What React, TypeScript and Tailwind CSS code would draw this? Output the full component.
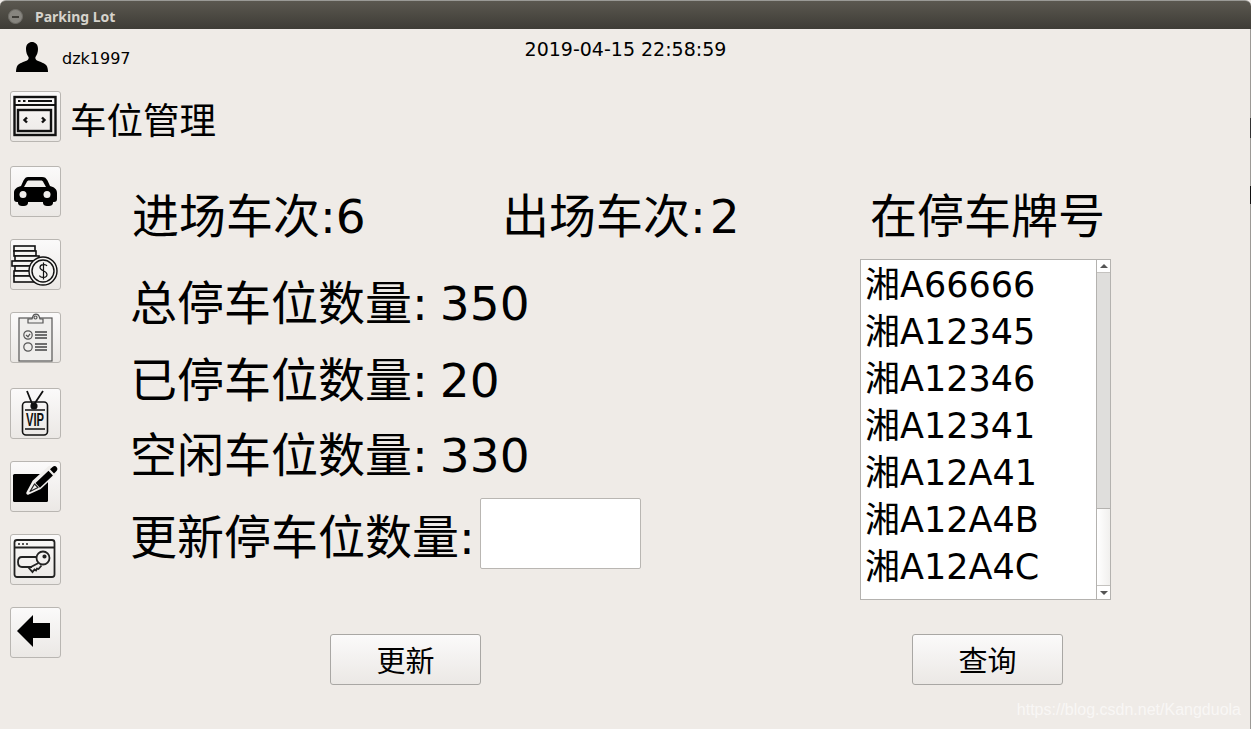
import React from "react";

const cjk = "font-['DejaVu_Sans','Noto_Sans_CJK_SC',sans-serif]";

const plates = ["湘A66666", "湘A12345", "湘A12346", "湘A12341", "湘A12A41", "湘A12A4B", "湘A12A4C"];

const IconWindow = () => (
  <svg width="45" height="45" viewBox="0 0 45 45" fill="none" stroke="#111" strokeWidth="2.2">
    <rect x="1.5" y="3" width="41" height="38" strokeWidth="2.4" />
    <path d="M1.5 11h41" />
    <path d="M5 7h2.5M10 7h2.5M15 7h24" strokeWidth="1.8" />
    <rect x="5" y="16" width="33" height="21" strokeWidth="2.4" />
    <path d="M14 23.500l-2.500 2.500 2.500 2.500M29 23.500l2.500 2.500-2.500 2.500" strokeWidth="2.4" />
  </svg>
);

const IconCar = () => (
  <svg width="45" height="45" viewBox="0 0 45 45">
    <path
      fill="#000"
      d="M15 8h14c3 0 4 1 5.500 3.500L37 17c4 1 7 3 7 7v6c0 2-1 3-3 3h-1v1c0 2-2 3-4 3h-2c-2 0-4-1-4-3v-1H15v1c0 2-2 3-4 3H9c-2 0-4-1-4-3v-1H4c-2 0-3-1-3-3v-6c0-4 3-6 7-7l2.500-5.500C12 9 13 8 15 8z"
    />
    <path fill="#f1efed" d="M16 11.500h12c1 0 2 .5 2.500 2L33 18H11l2.500-4.500c.5-1.500 1.500-2 2.500-2z" />
    <circle cx="10" cy="25.500" r="3.500" fill="#f1efed" />
    <circle cx="34" cy="25.500" r="3.500" fill="#f1efed" />
  </svg>
);

const IconCoins = () => (
  <svg width="49" height="45" viewBox="0 0 49 45" fill="#f5f4f2" stroke="#111" strokeWidth="1.6">
    <rect x="3" y="4" width="21" height="5" />
    <rect x="3" y="9" width="22" height="5" />
    <rect x="4" y="14" width="24" height="5" />
    <rect x="1" y="19" width="24" height="5" />
    <rect x="4" y="24" width="23" height="5" />
    <rect x="3" y="29" width="24" height="5" />
    <rect x="3" y="34" width="26" height="6" />
    <circle cx="32" cy="29" r="14" strokeWidth="1.4" />
    <circle cx="32" cy="29" r="11" strokeWidth="1.4" />
    <path d="M36 24c-1-2-7-2-7 1.500s7 3 7 7-7 3.500-7.500 1M32.500 20.500v17" fill="none" strokeWidth="1.2" />
  </svg>
);

const IconClipboard = () => (
  <svg width="45" height="49" viewBox="0 0 45 49" fill="none" stroke="#555" strokeWidth="1.2">
    <rect x="6" y="5" width="33" height="43" fill="#efeeec" />
    <path d="M15 10V6h4l1-3c1-2.500 5-2.500 6 0l1 3h3v4z" fill="#efeeec" />
    <circle cx="22.500" cy="4.500" r="1.500" />
    <circle cx="15" cy="22" r="4.200" />
    <path d="M13 22l2 1.800 2-3" />
    <circle cx="15" cy="34" r="4.200" />
    <path d="M22 19h12M22 22h12M22 25h12M22 31h12M22 34h12M22 37h12" strokeWidth="1.5" stroke="#444" />
  </svg>
);

const IconVip = () => (
  <svg width="45" height="49" viewBox="0 0 45 49" fill="none" stroke="#111" strokeWidth="1.6">
    <path d="M14 2l6 15M30 2l-10 15" strokeWidth="1.8" />
    <circle cx="21" cy="17" r="2.800" fill="#111" />
    <rect x="9.500" y="13" width="25" height="33" rx="3.500" />
    <path d="M12 21h20M12 40h20" strokeWidth="1.500" />
    <text x="13" y="37" textLength="18" lengthAdjust="spacingAndGlyphs" fontSize="19" fontWeight="700" fill="#111" stroke="none" fontFamily="Liberation Sans">VIP</text>
  </svg>
);

const IconEdit = () => (
  <svg width="49" height="47" viewBox="0 0 49 47">
    <rect x="2" y="11" width="35" height="28" rx="1.500" fill="#000" />
    <path d="M17 30l6-11.100 15.300-14.200 5.400 5.800L28.500 24.700z" fill="#f1efed" stroke="#f1efed" strokeWidth="3.500" strokeLinejoin="round" />
    <path d="M19 28.500l4.500-7.500 3.500 3.500z" fill="#f1efed" stroke="#222" strokeWidth="1.200" strokeLinejoin="round" />
    <path d="M24.500 20l13-12.300 4.400 4.700-13 12.300z" fill="#000" />
    <path d="M39 6.300l2.500-2.300c1.500-1.300 3-1.300 4 0 1.200 1.200 1.200 2.800 0 4l-2.500 2.500z" fill="#000" />
  </svg>
);

const IconKey = () => (
  <svg width="45" height="45" viewBox="0 0 45 45" fill="none" stroke="#222" strokeWidth="1.800">
    <rect x="1.500" y="3" width="40" height="37" rx="2.500" />
    <path d="M1.500 10.500h40" />
    <path d="M5 7h2M9 7h2M13 7h2" strokeWidth="1.500" />
    <path d="M24 20H9c-2.500 0-4 2-4 5s1.500 5 4 5h10" />
    <path d="M25.500 26L16 31l3.500 4 2-2.500 1.500 1 1-2 1.500.5 3-3.500" />
    <circle cx="30" cy="21" r="6.500" />
    <circle cx="31.500" cy="19.500" r="1.200" fill="#222" />
  </svg>
);

const IconBack = () => (
  <svg width="45" height="45" viewBox="0 0 45 45">
    <path d="M4 21L20 5v8h17v15H20v9z" fill="#000" />
  </svg>
);

// kept as a map so the sidebar stays readable
const navItems = [
  { icon: <IconCar />, className: "mt-[24px]" },
  { icon: <IconCoins />, className: "mt-[22px]" },
  { icon: <IconClipboard />, className: "mt-[22px]" },
  { icon: <IconVip />, className: "mt-[25px]" },
  { icon: <IconEdit />, className: "mt-[22px]" },
  { icon: <IconKey />, className: "mt-[22px]" },
  { icon: <IconBack />, className: "mt-[22px]" },
];

const IconButton: React.FC<{ className?: string; children: React.ReactNode }> = ({ className = "", children }) => (
  <button className={`flex h-[51px] w-[51px] items-center justify-center rounded-[3px] border border-[#b9b6b2] bg-gradient-to-b from-[#fbfafa] to-[#ebe8e5] ${className}`}>
    {children}
  </button>
);

const ActionButton: React.FC<{ label: string; className?: string }> = ({ label, className = "" }) => (
  <button className={`flex h-[51px] w-[151px] items-center justify-center rounded-[3px] border border-[#a9a7a4] bg-gradient-to-b from-[#fbfafa] to-[#ebe8e5] pt-[5px] text-[29px] leading-none text-black ${className}`}>
    {label}
  </button>
);

const StatRow: React.FC<{ label: string; value: string; className?: string }> = ({ label, value, className = "" }) => (
  <div className={`ml-[-2px] flex h-[60px] items-center text-[47px] leading-none whitespace-pre ${className}`}>
    <span>{label}</span>
    <span className="ml-[12px]">{value}</span>
  </div>
);

export default function App() {
  return (
    <div className={`relative flex h-[729px] w-[1251px] flex-col overflow-hidden bg-[#efebe7] text-black ${cjk}`}>
      {/* Title bar */}
      <div className="flex h-[29px] items-center rounded-t-[6px] border-t border-[#9a9a96] bg-gradient-to-b from-[#5b5850] to-[#3e3c36] pl-[8px] pt-[3px]">
        <div className="flex h-[15px] w-[15px] items-center justify-center rounded-full border border-[#6f6d67] bg-[#87857f]">
          <div className="h-[2px] w-[7px] bg-[#3f3d38]" />
        </div>
        <span className="ml-[12px] font-['Noto_Sans',sans-serif] text-[14px] font-bold text-[#d6d3cc]">Parking Lot</span>
      </div>

      {/* User and clock */}
      <div className="flex h-[62px] items-start">
        <div className="ml-[16px] mt-[13px] flex items-center">
          <svg width="32" height="30" viewBox="0 0 32 30">
            <path
              fill="#000"
              d="M10 7c0-5 3-7 6-7s6 2 6 7c0 3-1 6-2.500 8-.5 1 0 2.500 1.500 3.500 3 1.500 8 2.500 9.500 5 1 1.500 1.500 4 1.500 6.500H0c0-2.500.5-5 1.500-6.500 1.500-2.500 6.500-3.500 9.500-5 1.500-1 2-2.500 1.500-3.500C11 13 10 10 10 7z"
            />
          </svg>
          <span className="ml-[14px] pt-[3px] text-[16px] leading-none">dzk1997</span>
        </div>
        <div className="ml-[394px] mt-[10px] text-[19px] leading-[20px]">2019-04-15 22:58:59</div>
      </div>

      <div className="flex flex-1">
        {/* Sidebar */}
        <aside className="ml-[10px] flex w-[51px] flex-col">
          <IconButton>
            <IconWindow />
          </IconButton>
          {navItems.map((item, i) => (
            <IconButton key={i} className={item.className}>
              {item.icon}
            </IconButton>
          ))}
        </aside>

        <main className="flex flex-1 flex-col">
          <h1 className="ml-[9px] flex h-[60px] items-center pt-[2px] text-[36.500px] leading-none font-normal">车位管理</h1>

          <div className="flex">
            {/* Left column */}
            <div className="ml-[71px] w-[728px]">
              <div className="mt-[35px] flex h-[60px] items-center text-[47px] leading-none">
                <span className="w-[370px]">进场车次:6</span>
                <span>出场车次:</span>
                <span className="ml-[4px]">2</span>
              </div>
              <StatRow label="总停车位数量:" value="350" className="mt-[27px]" />
              <StatRow label="已停车位数量:" value="20" className="mt-[17px]" />
              <StatRow label="空闲车位数量:" value="330" className="mt-[15px]" />
              <div className="ml-[-2px] mt-[13px] flex items-center text-[47px] leading-none">
                <span className="pt-[8px]">更新停车位数量:</span>
                <div className="ml-[5px] h-[71px] w-[161px] rounded-[2px] border border-[#b9b6b2] bg-white" />
              </div>
              <ActionButton label="更新" className="ml-[198px] mt-[65px]" />
            </div>

            {/* Right column */}
            <div className="w-[251px]">
              <div className="mt-[35px] flex h-[60px] items-center pl-[10px] text-[47px] leading-none whitespace-nowrap">在停车牌号</div>
              <div className="mt-[13px] flex h-[341px] w-[251px] border border-[#b4b2af] bg-white">
                <ul className="flex-1 pl-[4px] pt-[2px]">
                  {plates.map((plate) => (
                    <li key={plate} className="h-[47px] text-[35px] leading-[47px] whitespace-nowrap">
                      {plate}
                    </li>
                  ))}
                </ul>
                <div className="flex w-[14px] flex-col border-l border-[#b4b2af]">
                  <div className="flex h-[13px] items-center justify-center border-b border-[#c4c2bf]">
                    <div className="h-0 w-0 border-x-[4px] border-b-[4px] border-x-transparent border-b-[#555]" />
                  </div>
                  <div className="h-[236px] border-b border-[#b4b2af] bg-[#dfdedc]" />
                  <div className="flex-1 bg-gradient-to-r from-white to-[#f1f0ee]" />
                  <div className="flex h-[14px] items-center justify-center border-t border-[#c4c2bf]">
                    <div className="h-0 w-0 border-x-[4px] border-t-[4px] border-x-transparent border-t-[#555]" />
                  </div>
                </div>
              </div>
              <ActionButton label="查询" className="ml-[52px] mt-[34px]" />
            </div>
          </div>
        </main>
      </div>

      {/* Window edge with the dark spots of what lies behind it */}
      <div className="absolute bottom-0 right-0 top-[29px] w-px bg-[#9c9a96]" />
      <div className="absolute right-0 top-[118px] h-[20px] w-px bg-[#333]" />
      <div className="absolute right-0 top-[186px] h-[18px] w-px bg-[#111]" />

      {/* Watermark */}
      <span className="absolute bottom-[9px] right-[10px] font-['Liberation_Sans',sans-serif] text-[16px] leading-[20px] text-white/60">
        https://blog.csdn.net/Kangduola
      </span>
    </div>
  );
}
